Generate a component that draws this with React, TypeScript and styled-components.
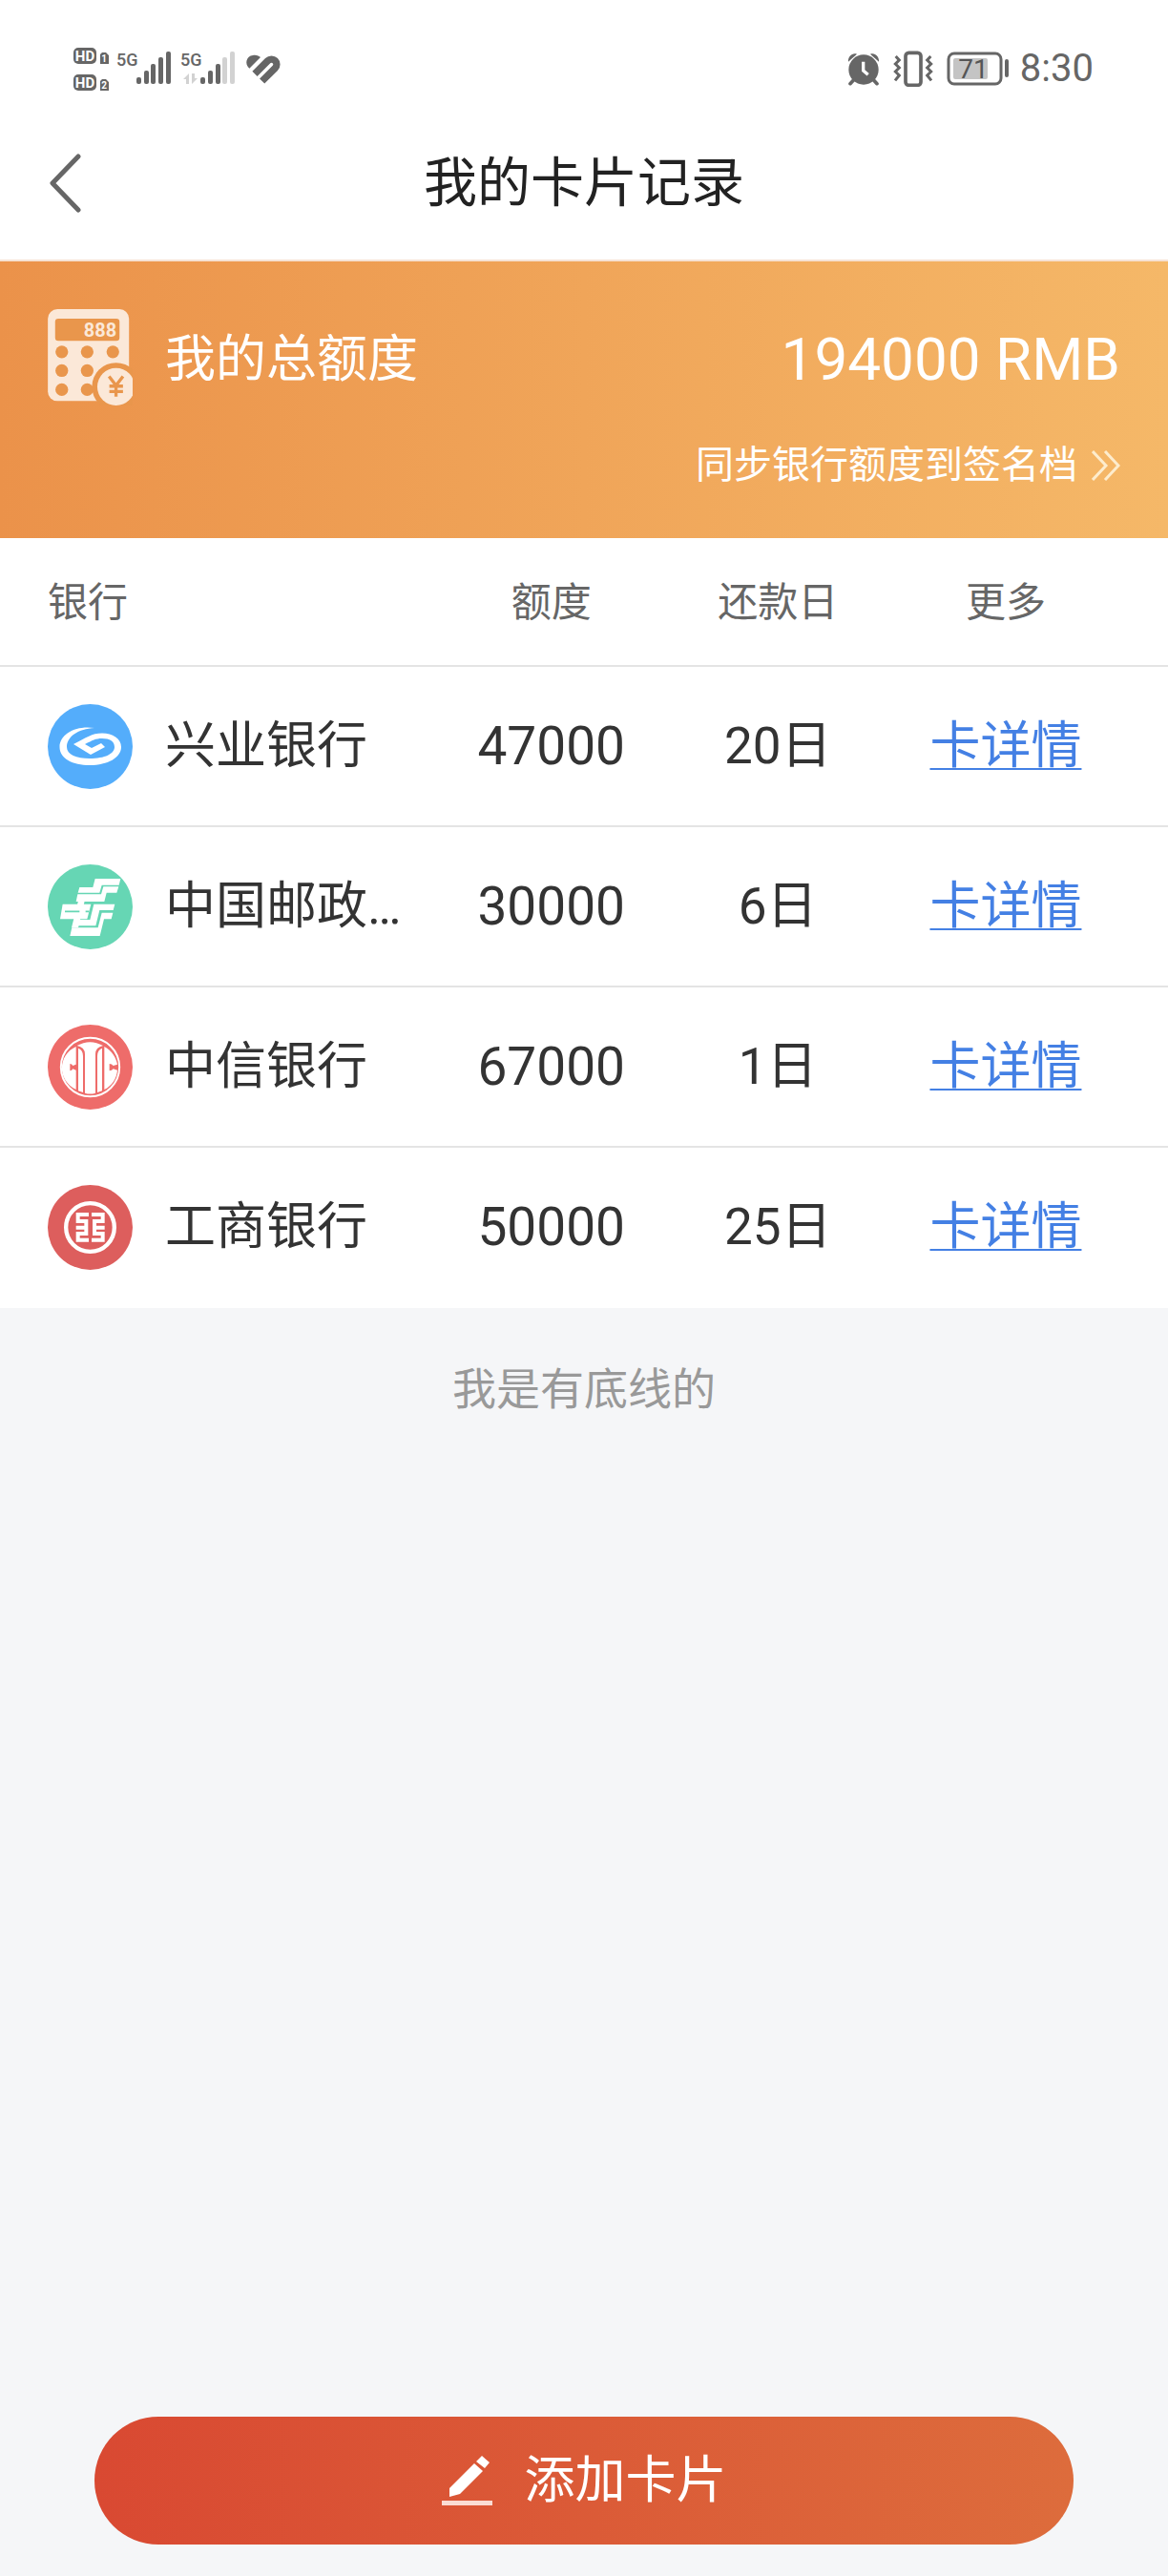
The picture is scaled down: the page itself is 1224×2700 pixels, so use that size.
import React from 'react';
import styled, { createGlobalStyle } from 'styled-components';

const GlobalStyle = createGlobalStyle`
  *, *::before, *::after { box-sizing: border-box; }
  body {
    margin: 0;
    background: #f5f6f8;
    font-family: Roboto, "Noto Sans CJK SC", sans-serif;
    color: #333;
  }
`;

const Page = styled.div`
  display: flex;
  flex-direction: column;
  min-height: 100vh;
`;

const StatusBar = styled.header`
  display: flex;
  align-items: center;
  justify-content: space-between;
  height: 112px;
  padding: 32px 78px 0 76px;
  background: #fff;
`;

const StatusGroup = styled.div`
  display: flex;
  align-items: center;
  gap: 14px;
`;

const Power = styled.div`
  display: flex;
  align-items: center;
  gap: 10px;
`;

const Clock = styled.time`
  font-size: 40px;
  line-height: 48px;
  color: #666;
`;

const TitleBar = styled.div`
  display: grid;
  grid-template-columns: 1fr auto 1fr;
  align-items: center;
  height: 162px;
  padding: 0 50px;
  background: #fff;
  border-bottom: 2px solid #f6e2d4;
`;

const BackButton = styled.button`
  display: flex;
  justify-self: start;
  padding: 0;
  border: 0;
  background: none;
`;

const Title = styled.h1`
  margin: 0;
  font-size: 56px;
  line-height: 80px;
  font-weight: 400;
  color: #222;
`;

const Summary = styled.section`
  padding: 50px 50px 46px;
  background: linear-gradient(90deg, #eb924a 0%, #f5b868 100%);
  color: #fff;
`;

const SummaryRow = styled.div`
  display: flex;
  align-items: center;
  height: 106px;

  > svg { align-self: flex-start; }
`;

const SummaryLabel = styled.h2`
  margin: 0 auto 0 34px;
  font-size: 53px;
  line-height: 72px;
  font-weight: 400;
`;

const Total = styled.strong`
  font-size: 62px;
  line-height: 72px;
  font-weight: 400;
`;

const SyncLink = styled.a`
  display: flex;
  align-items: center;
  justify-content: flex-end;
  gap: 15px;
  margin-top: 28px;
  font-size: 40px;
  line-height: 60px;
  color: #fff;
  text-decoration: none;
`;

const CardTable = styled.table`
  width: 100%;
  table-layout: fixed;
  border-collapse: separate;
  border-spacing: 0;
  background: #fff;
`;

const Col = styled.col<{ $width?: string }>`
  width: ${(p) => p.$width ?? 'auto'};
`;

const HeadCell = styled.th`
  height: 135px;
  padding: 2px 0 0;
  border-bottom: 2px solid #e4e4e4;
  font-size: 42px;
  line-height: 60px;
  font-weight: 400;
  color: #666;

  &:first-child { padding-left: 50px; text-align: left; }
  &:last-child { padding-right: 50px; }
`;

const Cell = styled.td<{ $size?: number }>`
  height: 168px;
  padding: 0;
  border-bottom: 2px solid #e4e4e4;
  font-size: ${(p) => p.$size ?? 53}px;
  line-height: 72px;
  text-align: center;

  &:first-child { padding-left: 50px; }
  &:last-child { padding-right: 50px; }
  tr:last-child > & { border-bottom-color: #fff; }
`;

const Bank = styled.div`
  display: flex;
  align-items: center;
  gap: 34px;
  white-space: nowrap;
`;

const DetailLink = styled.a`
  color: #4480e4;
  text-decoration: underline;
  text-decoration-thickness: 2px;
  text-underline-offset: 5px;
`;

const EndNote = styled.p`
  margin: 0;
  padding: 50px 0;
  font-size: 46px;
  line-height: 70px;
  text-align: center;
  color: #999;
`;

const Footer = styled.footer`
  display: flex;
  margin-top: auto;
  padding: 0 99px 33px;
`;

const AddButton = styled.button`
  display: flex;
  flex: 1;
  align-items: center;
  justify-content: center;
  gap: 34px;
  height: 134px;
  padding: 0;
  border: 0;
  border-radius: 67px;
  background: linear-gradient(90deg, #d94932 0%, #dd6c3c 100%);
  color: #fff;
  font-family: inherit;
  font-size: 53px;
  line-height: 72px;
`;

const NetworkIcons = () => (
  <svg width="220" height="50" viewBox="76 47 220 50" fill="#666" fontFamily="Roboto, sans-serif" fontWeight="700" aria-hidden="true">
    <rect x="77" y="50" width="24" height="17" rx="5" />
    <rect x="77" y="78" width="24" height="17" rx="5" />
    <path d="M107 55h4l3 3v9h-9V57zM107 83h4l3 3v9h-9V85z" />
    <g fill="#fff" textAnchor="middle">
      <text x="89" y="64" fontSize="15">HD</text>
      <text x="89" y="92" fontSize="15">HD</text>
      <text x="109" y="65" fontSize="10">1</text>
      <text x="109" y="93" fontSize="10">2</text>
    </g>
    <g fontWeight="500" fontSize="18">
      <text x="122" y="69">5G</text>
      <text x="189" y="69">5G</text>
    </g>
    <rect x="143" y="81" width="5" height="7" rx="2" />
    <rect x="151" y="74" width="5" height="14" rx="2" />
    <rect x="158" y="67" width="5" height="21" rx="2" />
    <rect x="166" y="60" width="5" height="28" rx="2" />
    <rect x="174" y="54" width="5" height="34" rx="2" />
    <rect x="210" y="81" width="5" height="7" rx="2" />
    <rect x="218" y="74" width="5" height="14" rx="2" />
    <rect x="226" y="67" width="5" height="21" rx="2" />
    <g fill="#d2d2d2">
      <rect x="233" y="60" width="5" height="28" rx="2" />
      <rect x="241" y="54" width="5" height="34" rx="2" />
      <path d="M192 83l6-6v11h-3v-5zM201 77v11l6-6h-3v-5z" />
    </g>
    <g transform="translate(246 48) scale(.3333)">
      <path d="M46 71C30 58 36 32 57 30C68 28 76 32 81 36Z" />
      <path d="M63 88L104 47A16 16 0 0 1 127 70L86 111" fill="none" stroke="#666" strokeWidth="22" />
    </g>
  </svg>
);

const AlarmIcon = () => (
  <svg width="34" height="36" viewBox="0 0 102 106" aria-hidden="true">
    <circle cx="51" cy="56" r="47" fill="#666" />
    <path d="M3 31C1 14 17 1 30 7ZM99 31C101 14 85 1 72 7Z" fill="#666" />
    <path d="M20 88L9 100M82 88L93 100" stroke="#666" strokeWidth="11" strokeLinecap="round" />
    <path d="M50 31V59L65 72" fill="none" stroke="#fff" strokeWidth="10" />
  </svg>
);

const VibrateIcon = () => (
  <svg width="42" height="38" viewBox="0 0 126 114" fill="none" stroke="#666" aria-hidden="true">
    <rect x="39" y="7" width="48" height="102" rx="10" strokeWidth="11" />
    <path d="M8 18L19 30L7 42L19 54L7 66L19 78L6 94M118 18L107 30L119 42L107 54L119 66L107 78L120 94" strokeWidth="9" />
  </svg>
);

const BatteryIcon = () => (
  <svg width="67" height="36" viewBox="0 0 67 36" aria-hidden="true">
    <rect x="2" y="2" width="55" height="32" rx="6" fill="none" stroke="#666" strokeWidth="3" />
    <rect x="7" y="7" width="36" height="22" rx="2" fill="#c4c4c4" />
    <rect x="61" y="8" width="4" height="19" rx="2" fill="#666" />
    <text x="28" y="28" fontFamily="Roboto, sans-serif" fontSize="28" textAnchor="middle" fill="#555">71</text>
  </svg>
);

const BackIcon = () => (
  <svg width="38" height="62" viewBox="0 0 38 62" fill="none" stroke="#666" strokeWidth="5" strokeLinecap="round" strokeLinejoin="round" aria-hidden="true">
    <path d="M32 3L5 31L32 59" />
  </svg>
);

const CalculatorIcon = () => (
  <svg width="89" height="101" viewBox="150 162 267 304" aria-hidden="true">
    <rect x="150" y="162" width="256" height="290" rx="30" fill="#fbe8d8" />
    <g fill="#e9964c">
      <rect x="173" y="192" width="203" height="70" rx="10" />
      {[297, 356, 416].map((y) => [194, 274, 355].map((x) => <circle key={`${x}-${y}`} cx={x} cy={y} r="20" />))}
      <circle cx="365" cy="407" r="76" />
    </g>
    <circle cx="365" cy="407" r="59" fill="#fbe8d8" />
    <path d="M343 374L365 403L387 374M365 403V438M344 405H387M344 422H387" fill="none" stroke="#e9964c" strokeWidth="10" />
    <text x="315" y="250" fontFamily="Roboto, sans-serif" fontWeight="700" fontSize="60" textAnchor="middle" fill="#fbe8d8">888</text>
  </svg>
);

const DoubleChevronIcon = () => (
  <svg width="30" height="32" viewBox="0 0 30 32" fill="none" stroke="#fdeccd" strokeWidth="3" aria-hidden="true">
    <path d="M1 1L15 16L1 31M14 1L28 16L14 31" />
  </svg>
);

const PenIcon = () => (
  <svg width="53" height="53" viewBox="0 0 53 53" fill="#fff" aria-hidden="true">
    <path d="M42 0L50 7L45 13L36 6ZM34 8L43 16L19 40L8 43L8 34Z" strokeLinejoin="round" />
    <rect x="0" y="47" width="53" height="5" fill="#fbdcd3" />
  </svg>
);

const IndustrialLogo = () => (
  <svg width="89" height="89" viewBox="0 0 89 89" aria-hidden="true">
    <circle cx="44.5" cy="44.5" r="44.5" fill="#54adfb" />
    <path fill="#fff" d="M49 25C30 22 12.500 31 12.500 45C12.500 57 26 64 44 64C63 64 77 56 77 45C77 36 68 30.500 57 30.500C46 30.500 41 35 27 42L45 53L60 45L56 41L46 46L39 42C47 38 50 36 57 36C65 36 70 39 70 45C70 52 60 57 44 57C30 57 20 53 20 45C20 34 32 26 49 25Z" />
  </svg>
);

const PostalLogo = () => (
  <svg width="89" height="89" viewBox="12 15 267 267" aria-hidden="true">
    <circle cx="145.500" cy="148.500" r="133.500" fill="#66d6b4" />
    <g fill="#fff">
      <path d="M161 60H241L236 80H182L175 104H107L112 87H154Z" />
      <path d="M187 85H235L229 104H197L190 132H101L106 109H180Z" />
      <path d="M59 140H148L136 187H51Z" />
      <path d="M157 140H223L218 159H175L163 208H91L96 189H145Z" />
      <path d="M182 167H217L212 187H189L176 240H82L88 214H170Z" />
      <path d="M111 118H131L108 214H87Z" />
    </g>
    <path d="M66 163H112M131 163H142" stroke="#66d6b4" strokeWidth="5" />
  </svg>
);

const CiticLogo = () => (
  <svg width="89" height="89" viewBox="60 579 267 267" aria-hidden="true">
    <circle cx="193.500" cy="712.500" r="133.500" fill="#ee6c6a" />
    <circle cx="193.500" cy="712.500" r="92" fill="none" stroke="#fff" strokeWidth="6" />
    <path fill="#fff" d="M152 645Q193 622 234 645Q210 650 210 672V794Q193 799 177 794V672Q177 650 152 645Z" />
    <path fill="#fff" d="M156 653Q171 658 171 678V792L156 787ZM231 653Q216 658 216 678V792L231 787Z" />
    <path fill="#fff" d="M149 648V704L139 708Q136 702 130 702V724Q136 724 139 718L149 722V783C90 754 90 675 149 648ZM238 648C262 660 276 685 279 704L266 708Q262 702 254 702V724Q262 724 266 718L279 722C277 746 263 771 238 783Z" />
  </svg>
);

const IcbcLogo = () => (
  <svg width="89" height="89" viewBox="60 1083 267 267" fill="none" stroke="#fff" aria-hidden="true">
    <circle cx="193.500" cy="1216.500" r="133.500" fill="#dd5e5d" stroke="none" />
    <circle cx="193.500" cy="1216.500" r="76" strokeWidth="13" />
    <path strokeWidth="12" d="M189 1176H155V1197H181V1236H155V1256H189M149 1217H181M198 1176H233V1197H207V1236H233V1256H198M207 1217H239" />
  </svg>
);

const cards = [
  { bank: '兴业银行', limit: 47000, day: 20, Logo: IndustrialLogo },
  { bank: '中国邮政…', limit: 30000, day: 6, Logo: PostalLogo },
  { bank: '中信银行', limit: 67000, day: 1, Logo: CiticLogo },
  { bank: '工商银行', limit: 50000, day: 25, Logo: IcbcLogo },
];

export default function App() {
  return (
    <Page lang="zh-CN">
      <GlobalStyle />
      <StatusBar>
        <NetworkIcons />
        <StatusGroup>
          <AlarmIcon />
          <VibrateIcon />
          <Power>
            <BatteryIcon />
            <Clock>8:30</Clock>
          </Power>
        </StatusGroup>
      </StatusBar>
      <TitleBar>
        <BackButton type="button" aria-label="返回">
          <BackIcon />
        </BackButton>
        <Title>我的卡片记录</Title>
      </TitleBar>
      <Summary>
        <SummaryRow>
          <CalculatorIcon />
          <SummaryLabel>我的总额度</SummaryLabel>
          <Total>194000 RMB</Total>
        </SummaryRow>
        <SyncLink href="#sync">
          同步银行额度到签名档
          <DoubleChevronIcon />
        </SyncLink>
      </Summary>
      <CardTable>
        <colgroup>
          <Col $width="37.5%" />
          <Col $width="19.4%" />
          <Col $width="19.4%" />
          <Col />
        </colgroup>
        <thead>
          <tr>
            <HeadCell scope="col">银行</HeadCell>
            <HeadCell scope="col">额度</HeadCell>
            <HeadCell scope="col">还款日</HeadCell>
            <HeadCell scope="col">更多</HeadCell>
          </tr>
        </thead>
        <tbody>
          {cards.map(({ bank, limit, day, Logo }) => (
            <tr key={bank}>
              <Cell>
                <Bank>
                  <Logo />
                  {bank}
                </Bank>
              </Cell>
              <Cell $size={55}>{limit}</Cell>
              <Cell>{`${day}日`}</Cell>
              <Cell>
                <DetailLink href="#detail">卡详情</DetailLink>
              </Cell>
            </tr>
          ))}
        </tbody>
      </CardTable>
      <EndNote>我是有底线的</EndNote>
      <Footer>
        <AddButton type="button">
          <PenIcon />
          添加卡片
        </AddButton>
      </Footer>
    </Page>
  );
}
